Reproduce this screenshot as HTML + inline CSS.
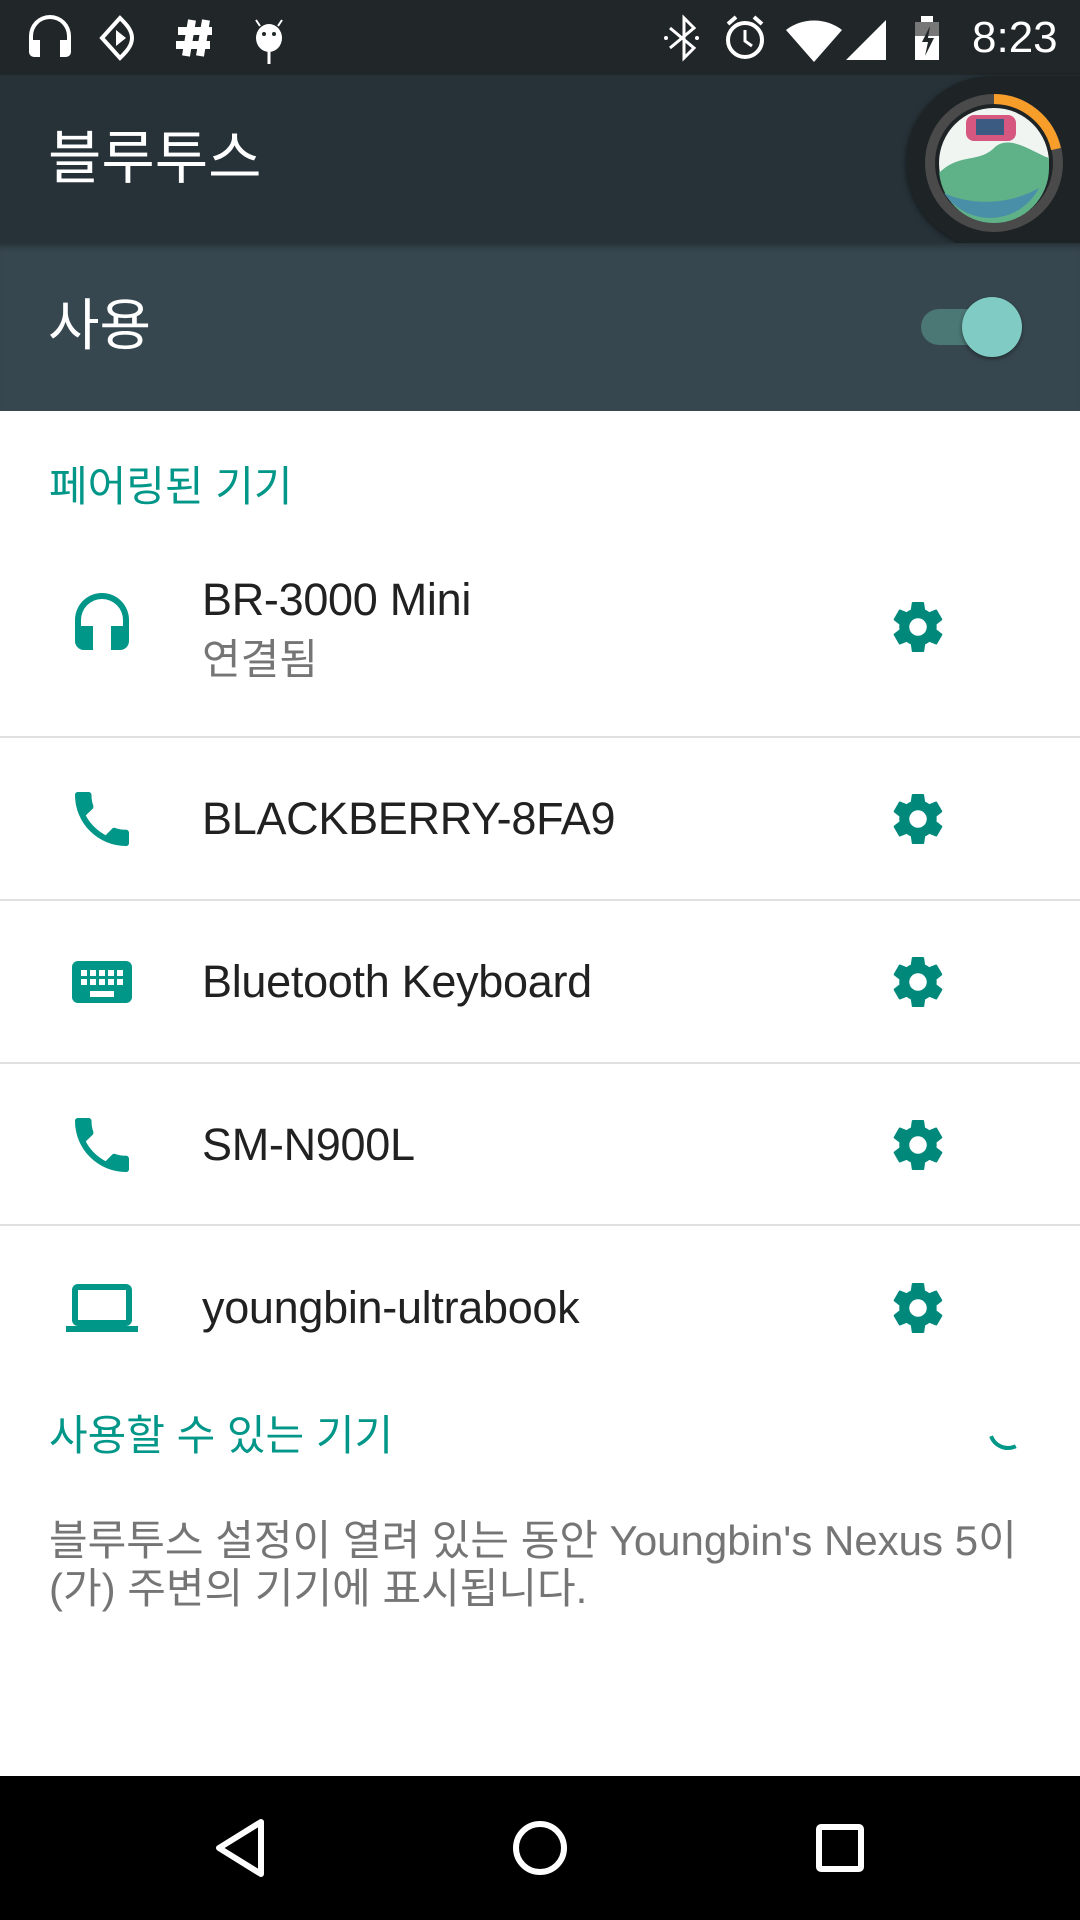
<!DOCTYPE html>
<html><head><meta charset="utf-8"><style>
*{margin:0;padding:0;box-sizing:border-box}
body{width:1080px;height:1920px;overflow:hidden;background:#fff;font-family:"Liberation Sans","Noto Sans CJK KR",sans-serif;position:relative}
.abs{position:absolute}
.sb{left:0;top:0;width:1080px;height:75px;background:#212629}
.tb{left:0;top:75px;width:1080px;height:168px;background:#263238}
.sw{left:0;top:243px;width:1080px;height:168px;background:#37474f;box-shadow:inset 0 8px 8px -6px rgba(0,0,0,.4)}
.t{color:#fff;white-space:nowrap}
.teal{color:#009688}
.nm{position:absolute;left:202px;font-size:45px;color:#212121;line-height:60px;white-space:nowrap;letter-spacing:-0.3px}
.div{left:0;width:1080px;height:2px;background:#e0e0e0}
.gear{position:absolute;left:888px;width:60px;height:60px}
.ic{position:absolute;left:66px;width:72px;height:72px}
</style></head><body>
<svg width="0" height="0" style="position:absolute"><defs>
<path id="g" d="M19.4 13c.04-.3.06-.6.06-1s-.02-.7-.06-1l2.1-1.65a.5.5 0 0 0 .12-.64l-2-3.46a.5.5 0 0 0-.61-.22l-2.49 1a7.3 7.3 0 0 0-1.69-.98l-.38-2.65A.49.49 0 0 0 14 2h-4a.49.49 0 0 0-.49.42l-.38 2.65c-.61.25-1.17.59-1.69.98l-2.49-1a.5.5 0 0 0-.61.22l-2 3.46a.49.49 0 0 0 .12.64L4.57 11c-.04.3-.07.66-.07 1s.03.7.07 1l-2.11 1.65a.5.5 0 0 0-.12.64l2 3.46c.12.22.39.3.61.22l2.49-1c.52.4 1.08.73 1.69.98l.38 2.650c.03.24.24.42.49.42h4c.25 0 .46-.18.49-.42l.38-2.65c.61-.25 1.17-.59 1.69-.98l2.49 1c.23.09.49 0 .61-.22l2-3.46a.5.5 0 0 0-.12-.64zM12 15.5A3.5 3.5 0 1 1 12 8.5a3.5 3.5 0 0 1 0 7z"/>
<path id="ph" d="M6.6 10.8c1.4 2.8 3.8 5.1 6.6 6.6l2.2-2.2c.3-.3.7-.4 1-.2 1.1.4 2.3.6 3.6.6.6 0 1 .4 1 1V20c0 .6-.4 1-1 1A17 17 0 0 1 3 4c0-.6.4-1 1-1h3.5c.6 0 1 .4 1 1 0 1.3.2 2.5.6 3.6.1.3 0 .7-.2 1z"/>
</defs></svg>
<div class="abs sb"></div>
<svg class="abs" style="left:26px;top:12px" width="270" height="52" viewBox="0 0 270 52" fill="#fff">
<path d="M3 40V24a21 21 0 0 1 42 0v16a5 5 0 0 1-5 5h-6V28h7v-4a17 17 0 0 0-34 0v4h7v17H8a5 5 0 0 1-5-5z"/>
<path d="M94 6l-18 20 18 20c6-6 12-12 12-20S100 12 94 6z" fill="none" stroke="#fff" stroke-width="4"/>
<path d="M90 18v16l10-8z"/>
<path d="M166 8l-6 36M180 8l-6 36M152 19h34M150 33h34" stroke="#fff" stroke-width="8" fill="none"/>
<ellipse cx="243" cy="26" rx="13" ry="14"/><path d="M243 38v14" stroke="#fff" stroke-width="3"/><path d="M234 14l-4-6M252 14l4-6" stroke="#fff" stroke-width="2"/>
<circle cx="238" cy="22" r="2" fill="#212629"/><circle cx="248" cy="22" r="2" fill="#212629"/>
</svg>
<svg class="abs" style="left:664px;top:12px" width="300" height="52" viewBox="0 0 300 52">
<path d="M6 16l24 20-10 10V6l10 10-24 20" stroke="#fff" stroke-width="3" fill="none"/>
<circle cx="2" cy="26" r="2" fill="#fff"/><circle cx="33" cy="26" r="2" fill="#fff"/>
<circle cx="81" cy="28" r="17" stroke="#fff" stroke-width="4" fill="none"/><path d="M81 18v11l7 5" stroke="#fff" stroke-width="3" fill="none"/>
<path d="M64 12l8-7M98 12l-8-7" stroke="#fff" stroke-width="4"/>
<path d="M122 18a46 46 0 0 1 56 0L150 50z" fill="#fff"/>
<path d="M222 8v40h-40z" fill="#fff"/>
<rect x="251" y="10" width="24" height="38" fill="#fff"/><rect x="257" y="4" width="12" height="6" fill="#fff"/>
<rect x="251" y="10" width="24" height="14" fill="#777"/><path d="M266 14l-8 16h6l-3 14 9-18h-6z" fill="#212629"/>
</svg>
<div class="abs t" style="left:972px;top:12px;font-size:44px;line-height:52px">8:23</div>
<div class="abs tb"></div>
<div class="abs t" style="left:48px;top:124px;font-size:58px;line-height:70px">블루투스</div>
<div class="abs" style="left:906px;top:76px;width:200px;height:172px;border-radius:86px 0 0 86px;background:#1e2326;box-shadow:0 2px 6px rgba(0,0,0,.5)"></div>
<svg class="abs" style="left:924px;top:93px" width="140" height="140" viewBox="0 0 140 140">
<circle cx="70" cy="70" r="64" fill="none" stroke="#4a4a4a" stroke-width="10"/>
<path d="M70 6a64 64 0 0 1 62 50" fill="none" stroke="#f79d2a" stroke-width="10"/>
<circle cx="70" cy="70" r="55" fill="#f0f5f2"/>
<path d="M15 80c20-20 40-10 55-25s40 5 55 10v10a55 55 0 0 1-110 0z" fill="#5fb187"/>
<path d="M20 100c20 10 60 15 95-5a55 55 0 0 1-95 5z" fill="#4a8fa8"/>
<rect x="42" y="22" width="50" height="26" rx="8" fill="#d6577f"/><rect x="52" y="26" width="28" height="16" fill="#3c5b83"/>
</svg>
<div class="abs sw"></div>
<div class="abs t" style="left:48px;top:291px;font-size:56px;line-height:70px">사용</div>
<div class="abs" style="left:921px;top:309px;width:88px;height:36px;border-radius:18px;background:#4b7774"></div>
<div class="abs" style="left:962px;top:297px;width:60px;height:60px;border-radius:50%;background:#80cbc4;box-shadow:0 2px 4px rgba(0,0,0,.4)"></div>

<div class="abs teal" style="left:49px;top:460px;font-size:42px;line-height:54px">페어링된 기기</div>

<svg class="ic" style="top:590px" viewBox="0 0 24 24" fill="#009688"><path d="M12 1a9 9 0 0 0-9 9v7a3 3 0 0 0 3 3h3v-8H5v-2a7 7 0 0 1 14 0v2h-4v8h3a3 3 0 0 0 3-3v-7a9 9 0 0 0-9-9z"/></svg>
<div class="nm" style="top:570px">BR-3000 Mini</div>
<div class="abs" style="left:202px;top:632px;font-size:42px;color:#757575;line-height:56px">연결됨</div>
<svg class="gear" style="top:597px" viewBox="0 0 24 24" fill="#00897b"><use href="#g"/></svg>
<div class="abs div" style="top:736px"></div>

<svg class="ic" style="top:783px" viewBox="0 0 24 24" fill="#009688"><use href="#ph"/></svg>
<div class="nm" style="top:789px">BLACKBERRY-8FA9</div>
<svg class="gear" style="top:789px" viewBox="0 0 24 24" fill="#00897b"><use href="#g"/></svg>
<div class="abs div" style="top:899px"></div>

<svg class="ic" style="top:946px" viewBox="0 0 24 24" fill="#009688"><path d="M20 5H4c-1.1 0-2 .9-2 2v10c0 1.1.9 2 2 2h16c1.1 0 2-.9 2-2V7c0-1.1-.9-2-2-2zm-9 3h2v2h-2zm0 3h2v2h-2zM8 8h2v2H8zm0 3h2v2H8zm-1 2H5v-2h2zm0-3H5V8h2zm9 7H8v-2h8zm0-4h-2v-2h2zm0-3h-2V8h2zm3 3h-2v-2h2zm0-3h-2V8h2z"/></svg>
<div class="nm" style="top:952px">Bluetooth Keyboard</div>
<svg class="gear" style="top:952px" viewBox="0 0 24 24" fill="#00897b"><use href="#g"/></svg>
<div class="abs div" style="top:1062px"></div>

<svg class="ic" style="top:1109px" viewBox="0 0 24 24" fill="#009688"><use href="#ph"/></svg>
<div class="nm" style="top:1115px">SM-N900L</div>
<svg class="gear" style="top:1115px" viewBox="0 0 24 24" fill="#00897b"><use href="#g"/></svg>
<div class="abs div" style="top:1224px"></div>

<svg class="ic" style="top:1272px" viewBox="0 0 24 24" fill="#009688"><path d="M20 18c1.1 0 2-.9 2-2V6c0-1.1-.9-2-2-2H4c-1.1 0-2 .9-2 2v10c0 1.1.9 2 2 2H0v2h24v-2zM4 6h16v10H4z"/></svg>
<div class="nm" style="top:1278px">youngbin-ultrabook</div>
<svg class="gear" style="top:1278px" viewBox="0 0 24 24" fill="#00897b"><use href="#g"/></svg>

<div class="abs teal" style="left:49px;top:1409px;font-size:42px;line-height:54px">사용할 수 있는 기기</div>
<svg class="abs" style="left:984px;top:1406px" width="48" height="48" viewBox="0 0 48 48"><path d="M6 24a18 18 0 0 0 36 0" fill="none" stroke="#009688" stroke-width="4" transform="rotate(-20 24 24)" stroke-dasharray="30 100"/></svg>
<div class="abs" style="left:49px;top:1517px;width:1020px;font-size:42px;line-height:48px;color:#757575">블루투스 설정이 열려 있는 동안 Youngbin's Nexus 5이<br>(가) 주변의 기기에 표시됩니다.</div>

<div class="abs" style="left:0;top:1776px;width:1080px;height:144px;background:#000"></div>
<svg class="abs" style="left:0;top:1776px" width="1080" height="144" viewBox="0 0 1080 144">
<path d="M261 46v52l-42-26z" fill="none" stroke="#fff" stroke-width="6" stroke-linejoin="round"/>
<circle cx="540" cy="72" r="24" fill="none" stroke="#fff" stroke-width="6"/>
<rect x="819" y="51" width="42" height="42" rx="2" fill="none" stroke="#fff" stroke-width="6"/>
</svg>
</body></html>
